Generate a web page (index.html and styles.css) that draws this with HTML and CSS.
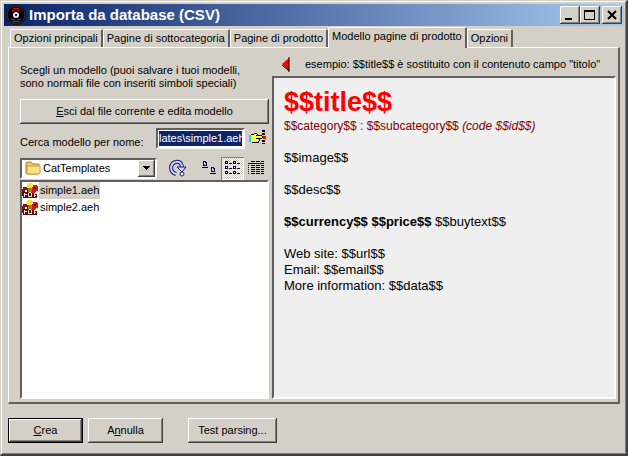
FILE: index.html
```
<!DOCTYPE html>
<html lang="it">
<head>
  <meta charset="UTF-8" />
  <meta name="viewport" content="width=device-width, initial-scale=1.0"/>
  <title>Importa da database (CSV)</title>
  <link rel="stylesheet" href="styles.css">
</head>
<body>
  <div class="window">

    <!-- Title bar -->
    <header class="titlebar">
      <svg class="app-icon" width="20" height="20" viewBox="0 0 20 20">
        <circle cx="10" cy="10" r="10" fill="#000"/>
        <circle cx="10" cy="10" r="9" fill="none" stroke="#3a3a3a"/>
        <path d="M7 3h6v1H7zM6 5h3v1H6zM11 5h2v1h-2z" fill="#d01010"/>
        <path d="M5 14h4v1H5zM11 14h4v1h-4zM6 16h8v1H6z" fill="#d01818"/>
        <circle cx="10" cy="10" r="3" fill="#dfe6f8"/>
        <rect x="9" y="9" width="2" height="2" fill="#20242c"/>
      </svg>
      <h1>Importa da database (CSV)</h1>
      <div class="window-buttons">
        <button aria-label="Riduci a icona"><svg width="14" height="12" viewBox="0 0 14 12" shape-rendering="crispEdges"><path d="M2 9h7v2H2z"/></svg></button>
        <button aria-label="Ingrandisci"><svg width="14" height="12" viewBox="0 0 14 12" shape-rendering="crispEdges"><path d="M1 1h11v10H1zM2 3v7h9V3z" fill-rule="evenodd"/></svg></button>
        <button class="close" aria-label="Chiudi"><svg width="14" height="12" viewBox="0 0 14 12"><path d="M3 2l8 8M11 2l-8 8" stroke="#000" stroke-width="2"/></svg></button>
      </div>
    </header>

    <!-- Tabs -->
    <div class="tabs" role="tablist">
      <button role="tab">Opzioni principali</button>
      <button role="tab">Pagine di sottocategoria</button>
      <button role="tab">Pagine di prodotto</button>
      <button role="tab" class="active" aria-selected="true">Modello pagine di prodotto</button>
      <button role="tab">Opzioni</button>
    </div>

    <main class="panel">
      <!-- Template chooser -->
      <section class="chooser">
        <p class="intro">Scegli un modello (puoi salvare i tuoi modelli,<br>sono normali file con inseriti simboli speciali)</p>
        <button class="btn edit"><span><u>E</u>sci dal file corrente e edita modello</span></button>

        <div class="search-row">
          <label for="name">Cerca modello per nome:</label>
          <div class="name-field"><input type="text" id="name" value="lates\simple1.aeh"></div>
          <button class="icon-btn" aria-label="Sfoglia">
            <svg width="18" height="16" viewBox="0 0 18 16" shape-rendering="crispEdges">
              <path d="M1 5h2v7H1z" fill="#00e0e0"/>
              <path d="M3 5h3V4h3v2h6v2h-4v2h-1v2H9v1H4v-1H3z" fill="#ffff40"/>
              <path d="M3 4h3v1H3zM6 3h3v1H6zM9 4h1v1H9zM8 5h6v1H8zM14 6h1v2h-1zM8 8h6v1H8zM11 9h1v2h-1zM10 11h1v2h-1zM4 12h6v1H4z" fill="#000"/>
              <path d="M14 0h3v2h-3zM14 3h3v2h-3zM14 10h3v2h-3zM14 13h3v1h-3z" fill="#000"/>
              <path d="M15 6h3v3h-3z" fill="#f00"/>
            </svg>
          </button>
        </div>

        <div class="toolbar">
          <div class="folder-field">
            <svg width="16" height="14" viewBox="0 0 16 14">
              <path d="M1 12V2l1-1h4l2 2h6v9l-1 1H2z" fill="#f2cb62" stroke="#a8842c"/>
              <path d="M2 12V5h13v7l-1 1H3z" fill="#ffe48c" stroke="#c99a3c"/>
            </svg>
            <select aria-label="Cartella"><option>CatTemplates</option></select>
            <span class="drop"><svg width="7" height="4" viewBox="0 0 7 4" shape-rendering="crispEdges"><path d="M0 0h7v1H6v1H5v1H4v1H3V3H2V2H1V1H0z"/></svg></span>
          </div>
          <button class="icon-btn up" aria-label="Aggiorna">
            <svg width="19" height="18" viewBox="0 0 19 18">
              <path d="M7 15C0 13 1 4 7 3c4-1 6 2 6 6" fill="none" stroke="#10187c" stroke-width="4"/>
              <path d="M7 15C0 13 1 4 7 3c4-1 6 2 6 6" fill="none" stroke="#d4d8e8" stroke-width="2"/>
              <path d="M8 8h9l-4 5z" fill="#d4d8e8" stroke="#10187c"/>
              <circle cx="13" cy="15" r="2" fill="#fff" stroke="#10187c"/>
            </svg>
          </button>
          <button class="icon-btn large" aria-label="Icone grandi">
            <svg width="14" height="14" viewBox="0 0 14 14" shape-rendering="crispEdges">
              <path d="M1 0h3v1h1v4H1zM2 1v3h2V2H3V1zM9 6h3v1h1v4H9zM10 7v3h2V8h-1V7z" fill="#000080" fill-rule="evenodd"/>
              <path d="M0 6h6v1H0zM8 12h6v1H8z"/>
            </svg>
          </button>
          <button class="icon-btn pressed" aria-label="Elenco">
            <svg width="16" height="14" viewBox="0 0 16 14" shape-rendering="crispEdges">
              <path d="M0 0h3v3H0zM1 1v1h1V1zM8 0h3v3H8zM9 1v1h1V1zM0 5h3v3H0zM1 6v1h1V6zM8 5h3v3H8zM9 6v1h1V6zM0 10h3v3H0zM1 11v1h1v-1zM8 10h3v3H8zM9 11v1h1v-1z" fill="#000080" fill-rule="evenodd"/>
              <path d="M4 2h3v1H4zM12 2h3v1h-3zM4 7h3v1H4zM12 7h3v1h-3zM4 12h3v1H4zM12 12h3v1h-3z"/>
            </svg>
          </button>
          <button class="icon-btn details" aria-label="Dettagli">
            <svg width="16" height="14" viewBox="0 0 16 14" shape-rendering="crispEdges">
              <path d="M0 2h16v1H0z" fill="#000080"/>
              <path d="M0 4h1v1H0zM0 6h1v1H0zM0 8h1v1H0zM0 10h1v1H0zM0 12h1v1H0z" fill="#000080"/>
              <path d="M3 .5h13M3 4.500h13M3 6.500h13M3 8.500h13M3 10.500h13M3 12.500h13" stroke="#000" stroke-dasharray="4 1"/>
            </svg>
          </button>
        </div>

        <ul class="files">
          <li class="selected">
            <svg width="17" height="16" viewBox="0 0 17 16"><use href="#aeh"/></svg><span>simple1.aeh</span>
          </li>
          <li>
            <svg width="17" height="16" viewBox="0 0 17 16">
              <g id="aeh" shape-rendering="crispEdges">
                <path d="M1 4h4v1h2v5H5V7H3v3H0V6h1z" fill="#901010"/>
                <path d="M9 2h5l2 2v4h-2l-1 3H9z" fill="#e01010"/>
                <path d="M12 4h2v2h-2z" fill="#400"/>
                <path d="M6 0h4v1h1v3h-1v1H6V4H5V1h1z" fill="#f4e830"/>
                <path d="M6 5h4v4H6z" fill="#a08010"/>
                <path d="M0 9h6v1h9v5H1v-2H0z" fill="#600808"/>
                <path d="M2 10h1v1h2v1H3v2H2zM6 10h1v3h2v-3h1v4H6zM12 10h3v1h-2v1h1v1h-1v1h-1z" fill="#e8e0d8"/>
              </g>
            </svg><span>simple2.aeh</span>
          </li>
        </ul>
      </section>

      <!-- Template preview -->
      <section class="example">
        <p class="hint">
          <svg width="9" height="15" viewBox="0 0 9 15"><path d="M8 1v13L1 7z" fill="#f00"/><path d="M8 0v15M8 14L1 8" fill="none" stroke="#000"/></svg>
          <span>esempio: $$title$$ è sostituito con il contenuto campo "titolo"</span>
        </p>
        <div class="preview">
          <h2>$$title$$</h2>
          <p class="category">$$category$$ : $$subcategory$$ <i>(code $$id$$)</i></p>
          <p>$$image$$</p>
          <p>$$desc$$</p>
          <p><b>$$currency$$ $$price$$</b> $$buytext$$</p>
          <p>Web site: $$url$$<br>Email: $$email$$<br>More information: $$data$$</p>
        </div>
      </section>
    </main>

    <footer class="actions">
      <button class="btn default"><span><u>C</u>rea</span></button>
      <button class="btn">A<u>n</u>nulla</button>
      <button class="btn test">Test parsing...</button>
    </footer>
  </div>
</body>
</html>
```
FILE: styles.css
```
* {
  box-sizing: border-box;
}

body {
  margin: 0;
  font-family: "Liberation Sans", Arial, sans-serif;
  font-size: 11px;
  line-height: 13px;
  color: #000;
  background: #d4d0c8;
}

button, input, select {
  font: inherit;
  color: inherit;
}

p, h1, h2, ul {
  margin: 0;
  padding: 0;
}

svg {
  display: block;
  flex: none;
}

.window {
  display: flex;
  flex-direction: column;
  min-height: 100vh;
  padding: 3px 2px 0 3px;
  border: 1px solid #d4d0c8;
  border-right: 2px solid #404040;
  border-bottom: 2px solid #404040;
  box-shadow: inset 1px 1px #fff, inset -1px -1px #808080;
}

/* Title bar */
.titlebar {
  display: flex;
  align-items: center;
  height: 22px;
  padding: 0 2px;
  background: linear-gradient(to right, #0a246a, #a6caf0);
  color: #fff;
}

.titlebar h1 {
  flex: 1;
  margin-left: 3px;
  font-size: 15px;
  line-height: 22px;
}

.window-buttons {
  display: flex;
}

.window-buttons button {
  display: flex;
  align-items: center;
  justify-content: center;
  width: 20px;
  height: 18px;
  padding: 0;
  border: 0;
  background: #d4d0c8;
  box-shadow: inset -1px -1px #404040, inset 1px 1px #fff, inset -2px -2px #808080;
}

.window-buttons .close {
  margin-left: 2px;
}

/* Tabs */
.tabs {
  display: flex;
  align-items: flex-end;
  height: 21px;
  padding-left: 6px;
}

.tabs button {
  height: 18px;
  padding: 0 3px;
  white-space: nowrap;
  border: 1px solid #fff;
  border-right: 2px solid #606060;
  border-bottom: 0;
  border-radius: 2px 2px 0 0;
  background: #d4d0c8;
}

.tabs .active {
  position: relative;
  height: 21px;
  margin-bottom: -1px;
  padding-bottom: 3px;
}

/* Panel */
.panel {
  display: flex;
  flex: 1;
  gap: 3px;
  margin: 0 4px;
  padding: 4px 2px 3px 11px;
  border: 1px solid #fff;
  border-right: 2px solid #606060;
  border-bottom: 2px solid #606060;
}

.chooser {
  display: flex;
  flex: 0 0 249px;
  flex-direction: column;
}

.intro {
  padding-top: 12px;
  white-space: nowrap;
}

.btn {
  height: 25px;
  padding: 0;
  border: 0;
  background: #d4d0c8;
  box-shadow: inset -1px -1px #404040, inset 1px 1px #fff, inset -2px -2px #808080;
}

.edit {
  margin-top: 9px;
}

.search-row {
  display: flex;
  align-items: center;
  height: 28px;
}

.search-row label {
  flex: 1;
  padding-top: 8px;
  white-space: nowrap;
}

.name-field,
.folder-field,
.files,
.preview {
  border: 2px solid;
  border-color: #606060 #fff #fff #606060;
}

.name-field {
  width: 89px;
  height: 21px;
  padding: 1px;
  background: #fff;
}

.name-field input {
  display: block;
  width: 100%;
  height: 15px;
  padding: 0;
  border: 0;
  background: #0a246a;
  color: #fff;
}

.icon-btn {
  display: flex;
  align-items: center;
  justify-content: center;
  padding: 0;
  border: 0;
  background: none;
}

.search-row .icon-btn {
  width: 24px;
}

.toolbar {
  display: flex;
  align-items: center;
  height: 28px;
  padding-top: 4px;
}

.folder-field {
  display: flex;
  align-items: center;
  width: 137px;
  height: 21px;
  padding-left: 3px;
  background: #fff;
}

.folder-field select {
  flex: 1;
  min-width: 0;
  padding: 0 2px;
  border: 0;
  background: none;
  appearance: none;
}

.drop {
  display: flex;
  align-items: center;
  justify-content: center;
  width: 17px;
  height: 17px;
  background: #d4d0c8;
  box-shadow: inset -1px -1px #404040, inset 1px 1px #fff, inset -2px -2px #808080;
}

.up {
  margin-left: 12px;
}

.large {
  margin-left: 14px;
}

.pressed {
  width: 23px;
  height: 23px;
  margin-left: 5px;
  background: repeating-conic-gradient(#fff 0 25%, #d4d0c8 0 50%) 0 0 / 2px 2px;
  box-shadow: inset 1px 1px #808080, inset -1px -1px #fff;
}

.details {
  margin-left: 4px;
}

.files {
  flex: 1;
  list-style: none;
  background: #fff;
}

.files li {
  display: flex;
  align-items: center;
  height: 17px;
}

.files span {
  padding: 2px 1px;
}

.selected span {
  background: #d4d0c8;
}

/* Preview */
.example {
  display: flex;
  flex: 1;
  flex-direction: column;
  min-width: 0;
}

.hint {
  display: flex;
  align-items: center;
  gap: 15px;
  height: 24px;
  padding: 1px 0 0 9px;
  white-space: nowrap;
}

.preview {
  flex: 1;
  padding: 8px 10px;
  background: #efefef;
  font-size: 13px;
  line-height: 16px;
}

.preview h2 {
  font-size: 27px;
  line-height: 32px;
  color: #f00;
}

.preview p {
  margin-bottom: 16px;
}

.preview .category {
  font-size: 12px;
  color: #800000;
}

/* Bottom buttons */
.actions {
  display: flex;
  gap: 5px;
  padding: 14px 4px 11px;
}

.actions .btn {
  width: 75px;
}

.actions .default {
  border: 1px solid #000;
}

.actions .test {
  width: 89px;
  margin-left: 20px;
}
```
